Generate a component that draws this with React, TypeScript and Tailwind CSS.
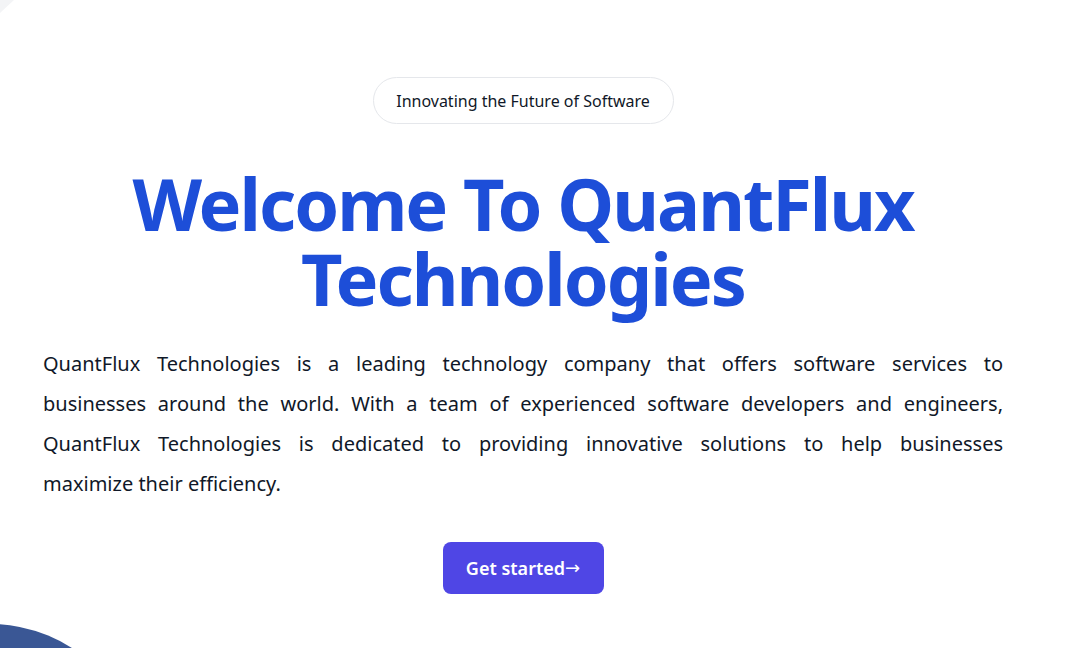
export default function App() {
  const lines = [
    'QuantFlux Technologies is a leading technology company that offers software services to',
    'businesses around the world. With a team of experienced software developers and engineers,',
    'QuantFlux Technologies is dedicated to providing innovative solutions to help businesses',
  ]

  return (
    <div className="relative min-h-[648px] w-full overflow-hidden bg-white" style={{ fontFamily: '"Noto Sans", "Open Sans", sans-serif' }}>
      {/* faint corner shape */}
      <svg className="absolute left-0 top-0" width="14" height="13" viewBox="0 0 14 13">
        <polygon points="0,0 14,0 0,13" fill="#f3f4f6" />
      </svg>

      <div className="flex w-[1046px] flex-col items-center px-[43px] pt-[77px]">
        <div className="flex h-[47px] w-[301px] items-center justify-center rounded-full border border-gray-200 text-base text-gray-900">
          Innovating the Future of Software
        </div>

        <h1 className="mt-[42px] text-center text-[72px] font-bold leading-[75px] tracking-[-2px] text-[#1d4ed8]">
          Welcome To QuantFlux
          <br />
          Technologies
        </h1>

        <p className="mt-[28px] w-full text-xl leading-10 text-gray-900">
          {lines.map((l) => (
            <span key={l} className="block text-justify [text-align-last:justify]">
              {l}
            </span>
          ))}
          <span className="block">maximize their efficiency.</span>
        </p>

        <button className="mt-[38px] flex h-[52px] w-[161px] items-center justify-center rounded-lg bg-[#4f46e5] text-lg font-semibold text-white">
          Get started
          <span className="font-normal" style={{ fontFamily: '"DejaVu Sans", sans-serif' }}>→</span>
        </button>
      </div>

      <div className="absolute left-[-162px] top-[624px] h-[304px] w-[304px] rounded-full bg-[#3a5795]" />
    </div>
  )
}
